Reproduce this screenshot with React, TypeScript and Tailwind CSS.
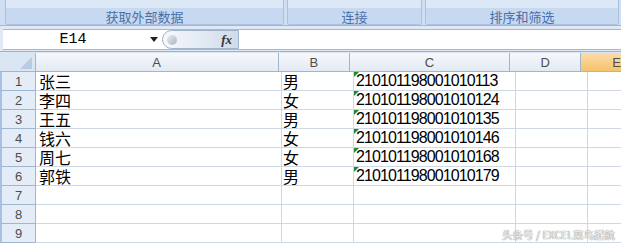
import React from 'react';

const rows = [
    { name: '张三', sex: '男', id: '210101198001010113' },
    { name: '李四', sex: '女', id: '210101198001010124' },
    { name: '王五', sex: '男', id: '210101198001010135' },
    { name: '钱六', sex: '女', id: '210101198001010146' },
    { name: '周七', sex: '女', id: '210101198001010168' },
    { name: '郭铁', sex: '男', id: '210101198001010179' },
    null,
    null,
    null,
];

const cjk = "font-['Noto_Sans_CJK_SC',sans-serif]";

const RibbonGroup = ({ label, className }: { label: string; className: string }) => (
    <div className={`flex flex-col rounded-b-[3px] border border-t-0 border-[#a9c2e2] ${className}`}>
        <div className="h-[8px] bg-[#dde8f6]" />
        <div className={`flex h-[16px] items-center justify-center bg-[#c6d9f0] text-[13px] leading-none text-[#4a6fa8] ${cjk}`}>{label}</div>
    </div>
);

const App = () => {
    return (
        <div className="w-[621px] h-[243px] overflow-hidden bg-white relative">
            {/* Ribbon */}
            <div className="flex h-[26px] gap-[3px] bg-[#cfdef2] pl-[5px] pr-[2px] border-b border-[#9fb9dc]">
                <RibbonGroup label="获取外部数据" className="w-[279px]" />
                <RibbonGroup label="连接" className="w-[135px]" />
                <RibbonGroup label="排序和筛选" className="flex-1" />
            </div>

            {/* Formula bar */}
            <div className="h-[25px] bg-[#dfe8f4] pl-[3px] pt-[3px] pb-[1px]">
                <div className="flex h-[21px] items-center bg-white border-y border-[#a4b8d0]">
                    <div className="w-[140px] text-center font-['Liberation_Mono',monospace] text-[15px] leading-none text-black">E14</div>
                    <svg width="8" height="5" viewBox="0 0 8 5" className="ml-[7px]">
                        <path d="M0 0 L8 0 L4 5 Z" fill="#222" />
                    </svg>
                    <div className="ml-[4px] flex h-[19px] w-[77px] items-center justify-between rounded-l-full border border-[#9eb3cc] bg-gradient-to-r from-[#f7f9fc] to-[#cedbec] pl-[4px] pr-[6px]">
                        <div className="h-[10px] w-[10px] rounded-full bg-gradient-to-br from-[#e8edf3] to-[#a9b5c2]" />
                        <span className="font-['Liberation_Serif',serif] text-[13px] leading-none font-bold italic text-[#333]">fx</span>
                    </div>
                </div>
            </div>
            <div className="h-[2px] bg-[#dde6f1] border-t border-[#9eb1c8]" />

            {/* Column headers */}
            <div className="flex h-[19px] font-['Liberation_Sans',sans-serif] text-[13px] leading-none text-[#4d4d4d]">
                <div className="relative w-[36px] border-r border-b border-[#9eb6ce] bg-[#dbe6f4]">
                    <svg width="12" height="12" viewBox="0 0 12 12" className="absolute right-[3px] bottom-[2px]">
                        <path d="M12 0 L12 12 L0 12 Z" fill="#b9cbe2" />
                    </svg>
                </div>
                <div className="flex w-[246px] items-center justify-center border-r border-b border-[#9eb6ce] bg-gradient-to-b from-[#f6f8fb] to-[#e3eaf4]">A</div>
                <div className="flex w-[72px] items-center justify-center border-r border-b border-[#9eb6ce] bg-gradient-to-b from-[#f6f8fb] to-[#e3eaf4]">B</div>
                <div className="flex w-[162px] items-center justify-center border-r border-b border-[#9eb6ce] bg-gradient-to-b from-[#f6f8fb] to-[#e3eaf4]">C</div>
                <div className="flex w-[72px] items-center justify-center border-r border-b border-[#9eb6ce] bg-gradient-to-b from-[#f6f8fb] to-[#e3eaf4]">D</div>
                <div className="flex flex-1 items-center pl-[31px] border-b border-[#f2a94a] bg-gradient-to-b from-[#fbdca7] to-[#f5c36b]">E</div>
            </div>

            {/* Rows */}
            {rows.map((r, i) => (
                <div key={i} className="flex h-[19px]">
                    <div className="flex w-[36px] items-center justify-center border-r border-b border-[#9eb6ce] border-l-[2px] border-l-[#a8c2e4] bg-[#e4ecf7] font-['Liberation_Sans',sans-serif] text-[13px] leading-none text-[#4d4d4d]">{i + 1}</div>
                    <div className={`flex w-[246px] items-center pl-[3px] border-r border-b border-[#d0d7e5] text-[16px] leading-[16px] text-black ${cjk}`}>{r?.name}</div>
                    <div className={`flex w-[72px] items-center pl-[1px] border-r border-b border-[#d0d7e5] text-[16px] leading-[16px] text-black ${cjk}`}>{r?.sex}</div>
                    <div className="relative flex w-[162px] items-center pl-[2px] border-r border-b border-[#d0d7e5] font-['Liberation_Sans',sans-serif] text-[16px] leading-[16px] tracking-[-0.9px] text-black">
                        {r && (
                            <svg width="5" height="5" viewBox="0 0 5 5" className="absolute left-0 top-0">
                                <path d="M0 0 L5 0 L0 5 Z" fill="#1e8a2e" />
                            </svg>
                        )}
                        {r?.id}
                    </div>
                    <div className="w-[72px] border-r border-b border-[#d0d7e5]" />
                    <div className="flex-1 border-b border-[#d0d7e5]" />
                </div>
            ))}

            {/* Watermark */}
            <div className={`absolute right-[6px] bottom-[3px] text-[10.5px] leading-none text-[#f2f2f2] [text-shadow:0_0_1px_#888,0_0_1px_#888] ${cjk}`}>
                头条号 / EXCEL菜鸟起航
            </div>
        </div>
    );
};

export default App;
